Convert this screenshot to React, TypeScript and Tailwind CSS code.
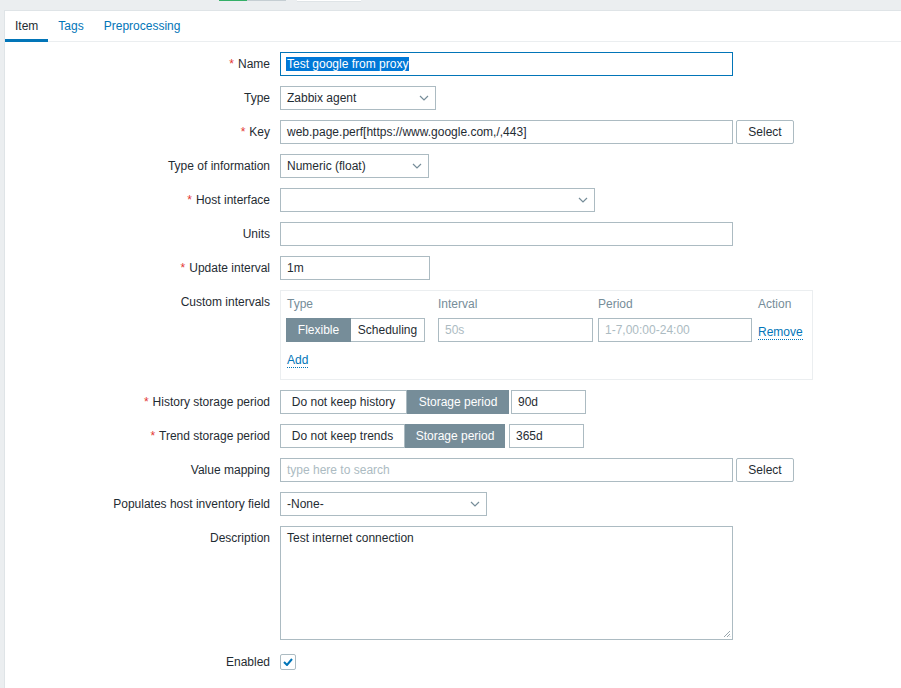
import React from "react";

const Chevron = () => (
  <svg width="10" height="6" viewBox="0 0 10 6" className="shrink-0">
    <path d="M1 1 L5 5 L9 1" fill="none" stroke="#768d99" strokeWidth="1.2" />
  </svg>
);

const Req = () => <span className="text-[#e33734] mr-[4px]">*</span>;

function Row({ label, req, children }: { label: string; req?: boolean; children: React.ReactNode }) {
  return (
    <div className="flex gap-[10px]">
      <div className="w-[265px] shrink-0 text-right leading-[24px]">
        {req && <Req />}
        {label}
      </div>
      <div className="flex items-start">{children}</div>
    </div>
  );
}

const Input = ({ w, value, placeholder }: { w: string; value?: string; placeholder?: string }) => (
  <div className={`${w} h-[24px] border border-[#acbbc2] bg-white px-[6px] leading-[22px] whitespace-nowrap overflow-hidden`}>
    {value ? value : <span className="text-[#acbbc2]">{placeholder}</span>}
  </div>
);

const Select = ({ w, value }: { w: string; value?: string }) => (
  <div className={`${w} h-[24px] border border-[#acbbc2] bg-white pl-[6px] pr-[6px] flex items-center justify-between`}>
    <span>{value ?? ""}</span>
    <Chevron />
  </div>
);

const Btn = ({ label }: { label: string }) => (
  <div className="ml-[3px] w-[58px] h-[24px] border border-[#acbbc2] rounded-[2px] bg-white text-center leading-[22px]">
    {label}
  </div>
);

export default function App() {
  return (
    <div className="min-h-[688px] bg-[#ebeef0] font-['Liberation_Sans',Arial,sans-serif] text-[12px] text-[#1f2c33] overflow-hidden">
      <div className="h-[10px] flex items-start">
        <div className="ml-[219px] w-[28px] h-[1px] bg-[#34af67]" />
        <div className="w-[39px] h-[1px] bg-[#c5ced3]" />
        <div className="ml-[11px] w-[64px] h-[2px] bg-white border-b border-[#dfe4e7]" />
      </div>
      <div className="ml-[4px] bg-white border-l border-t border-[#dfe4e7] min-h-[678px]">
        <div className="flex border-b border-[#ebeef0] h-[31px]">
          <div className="h-[31px] -mb-px px-[10px] pt-[8px] leading-[14px] border-b-[3px] border-[#0275b8] text-[#1f2c33]">Item</div>
          <div className="h-[31px] -mb-px px-[10px] pt-[8px] leading-[14px] text-[#0275b8]">Tags</div>
          <div className="h-[31px] -mb-px px-[10px] pt-[8px] leading-[14px] text-[#0275b8]">Preprocessing</div>
        </div>
        <div className="pt-[10px] flex flex-col gap-[10px]">
          <Row label="Name" req>
            <div className="w-[453px] h-[24px] border border-[#0275b8] bg-white px-[5px] leading-[22px] whitespace-nowrap">
              <span className="bg-[#0078d7] text-white px-[1px]">Test google from proxy</span>
            </div>
          </Row>
          <Row label="Type">
            <Select w="w-[156px]" value="Zabbix agent" />
          </Row>
          <Row label="Key" req>
            <Input w="w-[453px]" value="web.page.perf[https://www.google.com,/,443]" />
            <Btn label="Select" />
          </Row>
          <Row label="Type of information">
            <Select w="w-[149px]" value="Numeric (float)" />
          </Row>
          <Row label="Host interface" req>
            <Select w="w-[315px]" />
          </Row>
          <Row label="Units">
            <Input w="w-[453px]" value="" />
          </Row>
          <Row label="Update interval" req>
            <Input w="w-[150px]" value="1m" />
          </Row>
          <Row label="Custom intervals">
            <div className="w-[533px] h-[90px] border border-[#ebeef0] pl-[5px] pt-[6px]">
              <div className="flex h-[14px] leading-[14px] text-[#768d99]">
                <div className="w-[152px] pl-[1px]">Type</div>
                <div className="w-[160px]">Interval</div>
                <div className="w-[160px]">Period</div>
                <div>Action</div>
              </div>
              <div className="flex mt-[7px] h-[24px]">
                <div className="w-[152px] flex">
                  <div className="w-[65px] h-[24px] bg-[#768d99] border border-[#768d99] text-white text-center leading-[22px]">Flexible</div>
                  <div className="w-[74px] h-[24px] bg-white border border-[#acbbc2] border-l-0 text-center leading-[22px]">Scheduling</div>
                </div>
                <div className="w-[160px]">
                  <Input w="w-[155px]" placeholder="50s" />
                </div>
                <div className="w-[160px]">
                  <Input w="w-[154px]" placeholder="1-7,00:00-24:00" />
                </div>
                <div className="pt-[5px]">
                  <span className="text-[#0275b8] border-b border-dotted border-[#0275b8] leading-[14px] inline-block">Remove</span>
                </div>
              </div>
              <div className="mt-[11px] h-[14px] leading-[14px] pl-[1px]">
                <span className="text-[#0275b8] border-b border-dotted border-[#0275b8] inline-block leading-[13px]">Add</span>
              </div>
            </div>
          </Row>
          <Row label="History storage period" req>
            <div className="w-[127px] h-[24px] border border-[#acbbc2] bg-white text-center leading-[22px]">Do not keep history</div>
            <div className="w-[102px] h-[24px] border border-[#768d99] bg-[#768d99] text-white text-center leading-[22px]">Storage period</div>
            <div className="ml-[2px]">
              <Input w="w-[75px]" value="90d" />
            </div>
          </Row>
          <Row label="Trend storage period" req>
            <div className="w-[125px] h-[24px] border border-[#acbbc2] bg-white text-center leading-[22px]">Do not keep trends</div>
            <div className="w-[100px] h-[24px] border border-[#768d99] bg-[#768d99] text-white text-center leading-[22px]">Storage period</div>
            <div className="ml-[4px]">
              <Input w="w-[75px]" value="365d" />
            </div>
          </Row>
          <Row label="Value mapping">
            <Input w="w-[453px]" placeholder="type here to search" />
            <Btn label="Select" />
          </Row>
          <Row label="Populates host inventory field">
            <Select w="w-[207px]" value="-None-" />
          </Row>
          <Row label="Description">
            <div className="relative w-[453px] h-[114px] border border-[#acbbc2] bg-white px-[6px] pt-[4px] leading-[14px]">
              Test internet connection
              <svg width="8" height="8" viewBox="0 0 8 8" className="absolute right-[1px] bottom-[1px]">
                <path d="M7 1 L1 7 M7 4 L4 7 M7 6.5 L6.5 7" stroke="#9aa6ad" strokeWidth="1" />
              </svg>
            </div>
          </Row>
          <Row label="Enabled">
            <div className="h-[24px] flex items-center">
              <div className="w-[16px] h-[16px] border border-[#acbbc2] rounded-[2px] bg-white flex items-center justify-center">
                <svg width="10" height="8" viewBox="0 0 10 8">
                  <path d="M1 4 L4 7 L9 1" fill="none" stroke="#0275b8" strokeWidth="2" />
                </svg>
              </div>
            </div>
          </Row>
        </div>
      </div>
    </div>
  );
}
